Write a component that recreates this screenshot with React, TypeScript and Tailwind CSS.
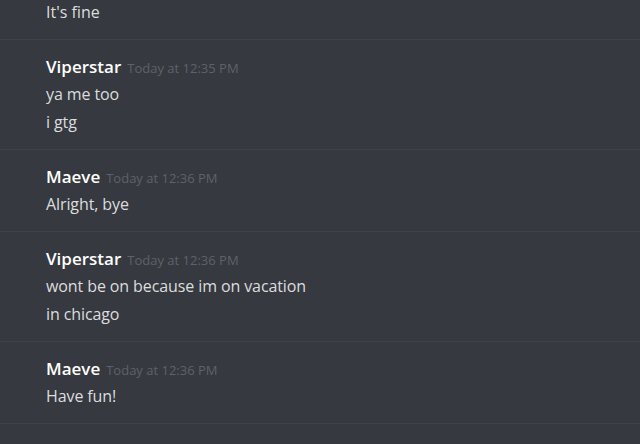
import React from 'react';

interface Group {
  author: string;
  time: string;
  lines: string[];
}

const groups: Group[] = [
  { author: 'Viperstar', time: 'Today at 12:35 PM', lines: ['ya me too', 'i gtg'] },
  { author: 'Maeve', time: 'Today at 12:36 PM', lines: ['Alright, bye'] },
  { author: 'Viperstar', time: 'Today at 12:36 PM', lines: ['wont be on because im on vacation', 'in chicago'] },
  { author: 'Maeve', time: 'Today at 12:36 PM', lines: ['Have fun!'] },
];

export default function App() {
  return (
    <div
      className="h-[444px] w-[640px] overflow-hidden bg-[#36393f]"
      style={{ fontFamily: '"Open Sans", "Noto Sans", sans-serif' }}
    >
      {/* tail of the previous group, scrolled past its header */}
      <div className="border-b border-[#3f4248] pb-[15px] pl-[46px]">
        <div className="text-[16px] leading-[24px] text-[#dcddde]">It's fine</div>
      </div>

      {groups.map((g, i) => (
        <div key={i} className="border-b border-[#3f4248] pt-[12px] pb-[13px] pl-[46px]">
          <div className="flex h-[28px] items-baseline gap-[6px] pt-[2px]">
            <span className="text-[17px] font-semibold text-white">{g.author}</span>
            <span className="text-[13px] text-[#5f6267]">{g.time}</span>
          </div>
          {g.lines.map((line, j) => (
            <div key={j} className="text-[16px] leading-[28px] tracking-[-0.1px] text-[#dcddde]">
              {line}
            </div>
          ))}
        </div>
      ))}
    </div>
  );
}
